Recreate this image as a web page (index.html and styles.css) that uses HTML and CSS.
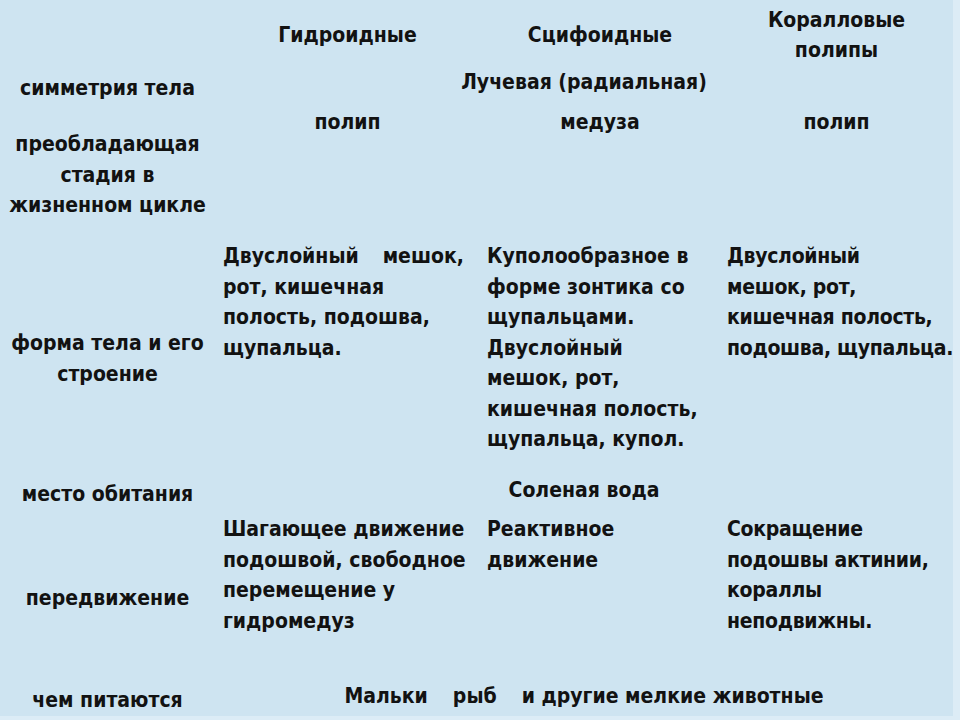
FILE: index.html
```html
<!DOCTYPE html>
<html lang="ru">
<head>
<meta charset="utf-8">
<link rel="stylesheet" href="styles.css">
</head>
<body>
<div class="slide">
  <div class="table">
    <!-- header -->
    <div class="cell label r-a"></div>
    <div class="cell head r-a">Гидроидные</div>
    <div class="cell head r-a">Сцифоидные</div>
    <div class="cell head r-a">Коралловые<br>полипы</div>

    <!-- symmetry -->
    <div class="cell label r-b">симметрия тела</div>
    <div class="cell span r-b">Лучевая (радиальная)</div>

    <!-- stage -->
    <div class="cell label r-c">преобладающая<br>стадия в<br>жизненном цикле</div>
    <div class="cell head r-c">полип</div>
    <div class="cell head r-c">медуза</div>
    <div class="cell head r-c">полип</div>

    <!-- form -->
    <div class="cell label r-d">форма тела и его<br>строение</div>
    <div class="cell text c1 r-d"><span class="just"><span>Двуслойный</span><span>мешок,</span></span>рот, кишечная<br>полость, подошва,<br>щупальца.</div>
    <div class="cell text c2 r-d">Куполообразное в<br>форме зонтика со<br>щупальцами.<br>Двуслойный<br>мешок, рот,<br>кишечная полость,<br>щупальца, купол.</div>
    <div class="cell text c3 r-d">Двуслойный<br>мешок, рот,<br>кишечная полость,<br>подошва, щупальца.</div>

    <!-- habitat -->
    <div class="cell label r-e">место обитания</div>
    <div class="cell span r-e">Соленая вода</div>

    <!-- movement -->
    <div class="cell label r-f">передвижение</div>
    <div class="cell text c1 r-f">Шагающее движение<br>подошвой, свободное<br>перемещение у<br>гидромедуз</div>
    <div class="cell text c2 r-f">Реактивное<br>движение</div>
    <div class="cell text c3 r-f">Сокращение<br>подошвы актинии,<br>кораллы<br>неподвижны.</div>

    <!-- food -->
    <div class="cell label r-g">чем питаются</div>
    <div class="cell span r-g">Мальки<span class="gap"></span>рыб<span class="gap"></span>и другие мелкие животные</div>
  </div>
</div>
</body>
</html>
```
FILE: styles.css
```css
html, body {
  margin: 0;
  padding: 0;
}
body {
  width: 960px;
  height: 720px;
  overflow: hidden;
  background: #cee4f1;
}
.slide {
  width: 960px;
  height: 720px;
  box-sizing: border-box;
  border-right: 7px solid #dcecf6;
  border-bottom: 4px solid #dcecf6;
  font-family: "DejaVu Sans Condensed", "Liberation Sans", sans-serif;
  font-weight: bold;
  font-size: 21px;
  line-height: 30.5px;
  color: #121212;
}
.table {
  display: grid;
  grid-template-columns: 215px 265px 240px 233px;
  grid-template-rows: 66px 38px 128px 238px 42px 158px 46px;
}
.cell {
  box-sizing: border-box;
  white-space: nowrap;
}
.label {
  text-align: center;
}
.head {
  text-align: center;
}
.span {
  grid-column: 2 / 5;
  text-align: center;
}
.text {
  text-align: left;
}
.c1 { padding-left: 8px; padding-right: 16px; }
.c2 { padding-left: 7px; }
.c3 { padding-left: 7px; letter-spacing: -0.3px; }
.just {
  display: flex;
  justify-content: space-between;
}
.gap {
  display: inline-block;
  width: 25px;
}

.r-a.head { align-self: center; padding-top: 4px; }
.r-b.label { padding-top: 7px; }
.r-b.span { padding-top: 1px; }
.r-c.label { padding-top: 25px; }
.r-c.head { padding-top: 3px; }
.r-d.label { padding-top: 96px; }
.r-d.text { padding-top: 9px; }
.r-e.label { padding-top: 9px; }
.r-e.span { padding-top: 5px; }
.r-f.label { padding-top: 71px; }
.r-f.text { padding-top: 2px; }
.r-g.label { padding-top: 15px; }
.r-g.span { padding-top: 11px; }
```
